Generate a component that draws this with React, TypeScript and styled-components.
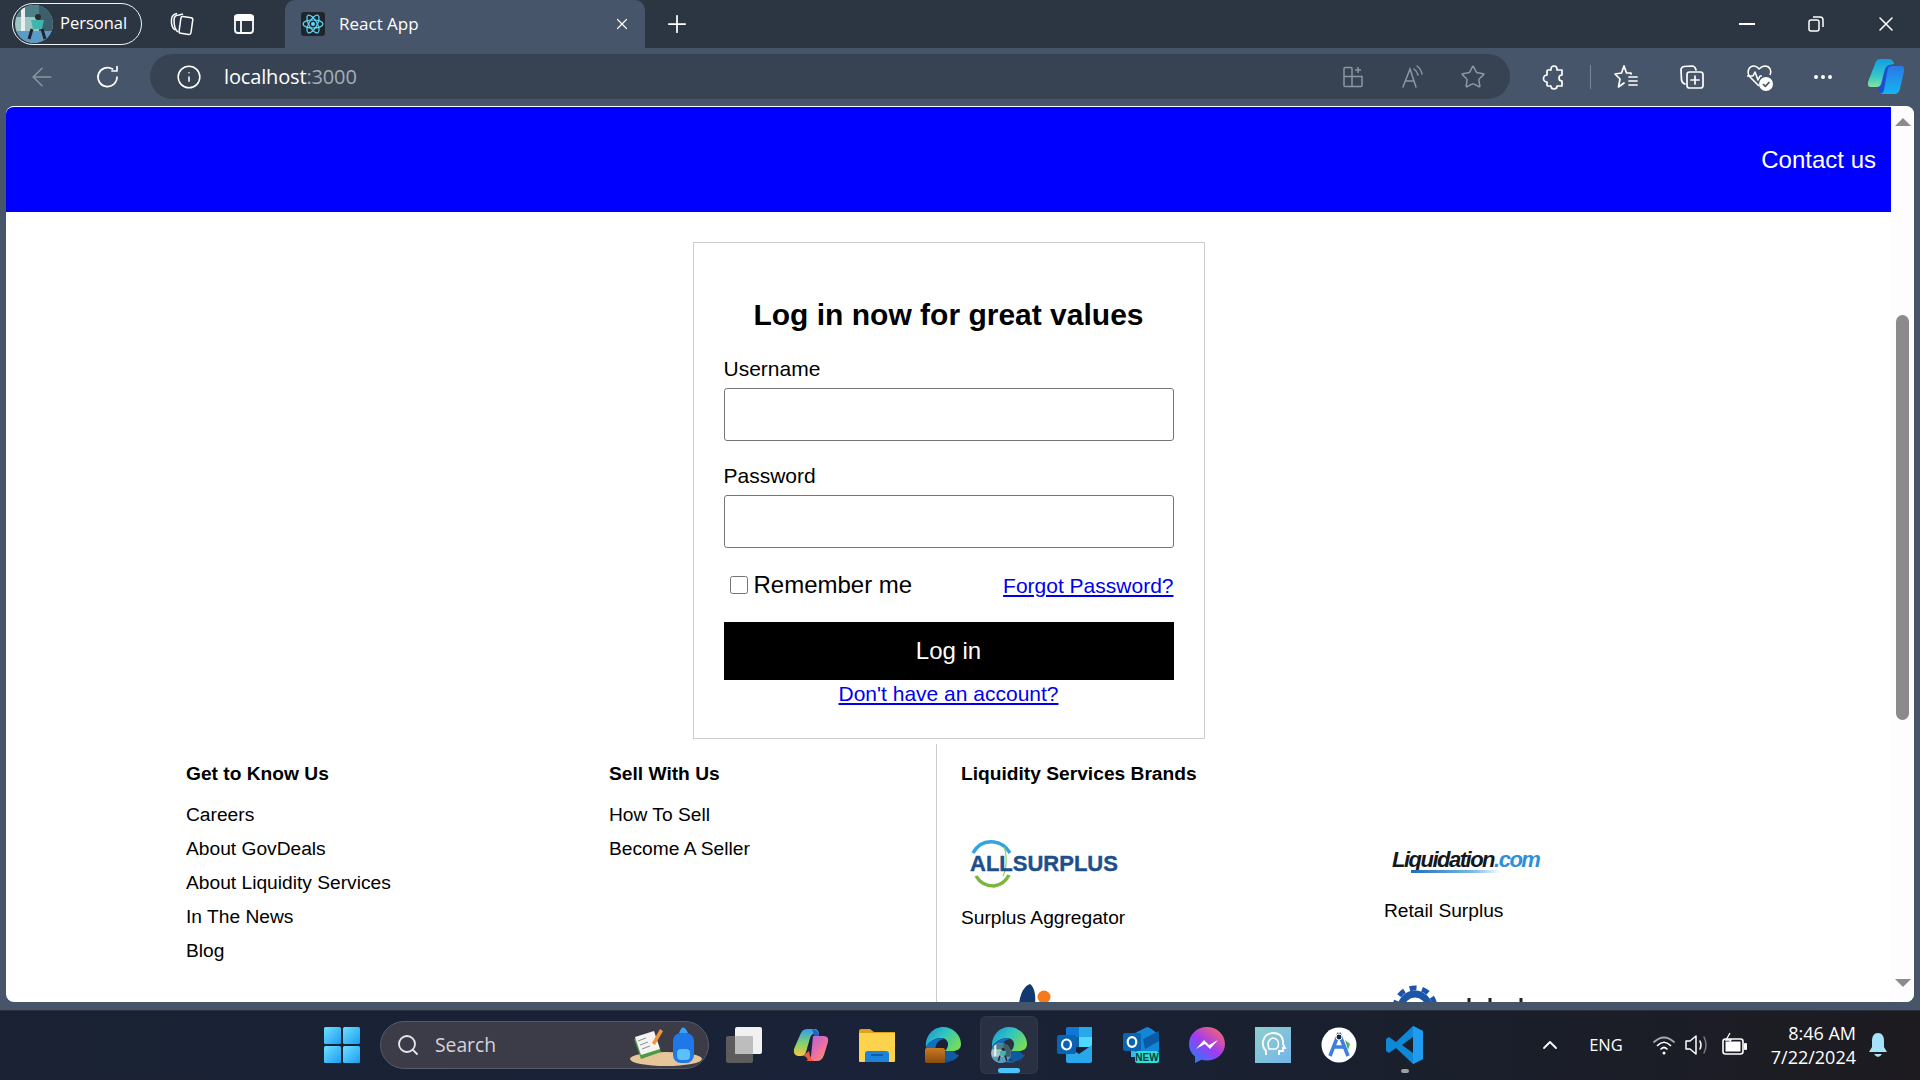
import styled, { createGlobalStyle } from 'styled-components';
import { ArrowLeft, Info, MoreHorizontal, Plus, Search, Star, X, ChevronUp } from 'lucide-react';

const GlobalStyle = createGlobalStyle`
  html, body {
    margin: 0;
    padding: 0;
    overflow: hidden;
    background: #465569;
  }
  * {
    box-sizing: border-box;
  }
`;

const Screen = styled.div`
  display: flex;
  flex-direction: column;
  width: 1920px;
  height: 1080px;
  overflow: hidden;
  background: #465569;
  font-family: 'Open Sans', 'Noto Sans', sans-serif;
`;

/* title bar */
const TitleBar = styled.div`
  display: flex;
  align-items: flex-end;
  flex: none;
  height: 48px;
  padding-left: 12px;
  background: #2c3643;
  color: #fff;
`;

const Profile = styled.div`
  display: flex;
  align-items: center;
  gap: 7px;
  align-self: flex-start;
  width: 130px;
  height: 42px;
  margin-top: 3px;
  padding: 0 0 0 2px;
  border: 1.5px solid #f2f4f6;
  border-radius: 21px;
  font-size: 16.5px;
  line-height: 36px;
`;

const ProfileName = styled.span`
  margin-top: -2px;
`;

const Slot = styled.div<{ $w: number; $ml?: number }>`
  position: relative;
  display: flex;
  align-items: center;
  justify-content: center;
  flex: none;
  width: ${(p) => p.$w}px;
  margin-left: ${(p) => p.$ml ?? 0}px;
`;

const TitleSlot = styled(Slot)`
  align-self: flex-start;
  height: 48px;
`;

const Tab = styled.div`
  display: flex;
  align-items: center;
  width: 360px;
  height: 48px;
  margin-left: 15px;
  padding: 0 14px 0 16px;
  border-radius: 10px 10px 0 0;
  background: #465569;
  font-size: 17px;
`;

const TabTitle = styled.span`
  flex: 1;
  margin: -2px 0 0 14px;
`;

const WindowButtons = styled.div`
  display: flex;
  align-self: flex-start;
  align-items: center;
  height: 48px;
  margin-left: auto;
`;

/* toolbar */
const Toolbar = styled.div`
  display: flex;
  align-items: center;
  flex: none;
  height: 58px;
  padding: 0 0 1px 20px;
  background: #465569;
  color: #fff;
`;

const Omnibox = styled.div`
  display: flex;
  align-items: center;
  width: 1360px;
  height: 45px;
  margin-left: 20px;
  padding: 0 7px 0 26px;
  border-radius: 23px;
  background: #374352;
`;

const Address = styled.span`
  flex: 1;
  margin-left: 22px;
  font-size: 20px;
  letter-spacing: -0.15px;
  color: #fff;
`;

const Port = styled.span`
  color: #a5adb7;
`;

const ToolDivider = styled.div`
  flex: none;
  width: 1px;
  height: 24px;
  margin-left: 14px;
  background: #7b8694;
`;

/* page */
const Viewport = styled.main`
  display: flex;
  flex: none;
  height: 896px;
  margin: 0 6px 8px;
  border-top: 1px solid #fff;
  border-radius: 8px;
  overflow: hidden;
  background: #fff;
  color: #000;
  font-family: 'Liberation Sans', Arial, sans-serif;
`;

const PageContent = styled.div`
  flex: 1;
  min-width: 0;
  overflow: hidden;
`;

const BlueHeader = styled.header`
  display: flex;
  align-items: center;
  justify-content: flex-end;
  height: 105px;
  padding-right: 15px;
  background: #0000ff;
  color: #fff;
  font-size: 24px;
`;

const Card = styled.form`
  display: flex;
  flex-direction: column;
  width: 512px;
  height: 497px;
  margin: 30px auto 0;
  padding: 30px;
  border: 1px solid #ccc;
`;

const CardTitle = styled.h1`
  margin: 25px 0 0;
  font-size: 30px;
  line-height: 34px;
  font-weight: 700;
  text-align: center;
`;

const Label = styled.label<{ $mt: number }>`
  display: block;
  margin-top: ${(p) => p.$mt}px;
  font-size: 21px;
  line-height: 24px;
`;

const TextInput = styled.input`
  display: block;
  width: 100%;
  height: 53px;
  margin-top: 7px;
  padding: 0 8px;
  border: 1px solid #767676;
  border-radius: 3px;
  background: #fff;
`;

const OptionsRow = styled.div`
  display: flex;
  align-items: center;
  justify-content: space-between;
  height: 36px;
  margin-top: 19px;
`;

const Remember = styled.label`
  display: flex;
  align-items: center;
  font-size: 24px;
`;

const Check = styled.input`
  width: 18px;
  height: 18px;
  margin: 0 6px 0 6px;
`;

const BlueLink = styled.a`
  color: #0000ee;
  font-size: 21px;
  line-height: 24px;
  text-decoration: underline;
`;

const ForgotLink = styled(BlueLink)`
  margin-top: 2px;
`;

const SubmitButton = styled.button`
  width: 100%;
  height: 58px;
  flex: none;
  margin-top: 19px;
  border: 0;
  background: #000;
  color: #fff;
  font-family: inherit;
  font-size: 24px;
`;

const SignupRow = styled.div`
  margin-top: 2px;
  text-align: center;
`;

/* footer */
const Footer = styled.footer`
  display: grid;
  grid-template-columns: 423px 328px 1fr;
  margin-top: 5px;
  padding-left: 180px;
`;

const FooterCol = styled.div<{ $divided?: boolean }>`
  padding-top: 18px;
  min-height: 260px;
  border-right: ${(p) => (p.$divided ? '1px solid #ccc' : '0')};
`;

const FooterHead = styled.h3`
  margin: 0 0 17px;
  font-size: 19.2px;
  line-height: 24px;
  font-weight: 700;
`;

const FooterLink = styled.div`
  margin-bottom: 10px;
  font-size: 19.2px;
  line-height: 24px;
`;

const BrandsCol = styled.div`
  padding: 18px 0 0 24px;
`;

const BrandGrid = styled.div`
  display: grid;
  grid-template-columns: 423px 423px;
  grid-auto-rows: 144px;
  margin-top: 54px;
`;

const BrandCell = styled.div`
  display: flex;
  flex-direction: column;
  align-items: flex-start;
`;

const BrandCaption = styled.div`
  font-size: 19.2px;
  line-height: 24px;
`;

const AllSurplusLogo = styled.div`
  position: relative;
  width: 156px;
  height: 48px;
  margin-bottom: 18px;
`;

const AllSurplusWord = styled.span`
  position: absolute;
  left: 9px;
  top: 11px;
  font-size: 22px;
  line-height: 26px;
  font-weight: 700;
  color: #1f4f8a;
  -webkit-text-stroke: 0.4px #1f4f8a;
`;

const LiquidationLogo = styled.div`
  position: relative;
  width: 156px;
  height: 30px;
  margin: 5px 0 24px 8px;
  font-size: 22px;
  line-height: 30px;
  font-weight: 700;
  font-style: italic;
  letter-spacing: -1.5px;
  color: #14181d;
  white-space: nowrap;
`;

const LiquidationCom = styled.span`
  color: #2f8fd8;
`;

const LiquidationSwoosh = styled.div`
  position: absolute;
  left: 19px;
  top: 25px;
  width: 90px;
  height: 3px;
  background: linear-gradient(90deg, #1f6fb5, #7dbbe8 70%, #fff);
`;

/* scrollbar */
const Scrollbar = styled.div`
  display: flex;
  flex-direction: column;
  align-items: center;
  flex: none;
  width: 23px;
  height: 100%;
  padding-top: 11px;
  background: #fdfdfd;
`;

const ScrollUp = styled.div`
  width: 0;
  height: 0;
  border-left: 8px solid transparent;
  border-right: 8px solid transparent;
  border-bottom: 8px solid #8b8b8b;
`;

const ScrollThumb = styled.div`
  width: 13px;
  height: 405px;
  margin-top: 189px;
  border-radius: 7px;
  background: #8b8b8b;
`;

const ScrollDown = styled.div`
  width: 0;
  height: 0;
  margin-top: 259px;
  border-left: 8px solid transparent;
  border-right: 8px solid transparent;
  border-top: 8px solid #8b8b8b;
`;

/* taskbar */
const Taskbar = styled.div`
  display: flex;
  align-items: center;
  flex: 1;
  padding: 0 20px 2px 309px;
  border-top: 1px solid #2a2f3a;
  background: linear-gradient(90deg, #1a2233 0%, #192238 45%, #1a1f2c 75%, #1d1b20 100%);
  color: #fff;
  font-size: 16px;
`;

const TaskSlot = styled(Slot)`
  height: 58px;
`;

const ActiveSlot = styled(TaskSlot)`
  border-radius: 6px;
  background: rgba(255, 255, 255, 0.07);
  box-shadow: inset 0 0 0 1px rgba(255, 255, 255, 0.04);
`;

const RunDot = styled.div<{ $active?: boolean }>`
  position: absolute;
  left: 50%;
  bottom: 1px;
  width: ${(p) => (p.$active ? 22 : 8)}px;
  height: ${(p) => (p.$active ? 5 : 4)}px;
  border-radius: 3px;
  transform: translateX(-50%);
  background: ${(p) => (p.$active ? '#4cc2ff' : '#9b9fa6')};
`;

const SearchBox = styled.div`
  display: flex;
  align-items: center;
  flex: none;
  width: 329px;
  height: 48px;
  margin: 0 3px 0 5px;
  padding: 0 6px 0 15px;
  border: 1px solid #5a5a66;
  border-radius: 24px;
  background: #3c3c48;
`;

const SearchLabel = styled.span`
  flex: 1;
  margin-left: 15px;
  font-size: 19.3px;
  color: #d4d4d8;
`;

const Tray = styled.div`
  display: flex;
  align-items: center;
  height: 100%;
  margin-left: auto;
`;

const TrayText = styled.span`
  width: 68px;
  margin: 0 7px 0 10px;
  text-align: center;
  font-size: 16.5px;
`;

const Clock = styled.div`
  width: 92px;
  margin-left: 7px;
  text-align: right;
  font-size: 18px;
  line-height: 24px;
  white-space: nowrap;
`;

/* icons */
const CollectionsIcon = () => (
  <svg width="26" height="26" viewBox="0 0 26 26" fill="none" stroke="#fff" strokeWidth="1.5">
    <rect x="11" y="6" width="12" height="17" rx="2" transform="rotate(8 17 14)" />
    <path d="M9 21 C6 19 5 16 5 9 C5 6 7 4 10 4 L14 3" />
    <path d="M6 19 C3 17 2 14 2.500 8 C3 5 5 3 8 2.500" />
  </svg>
);

const SidebarIcon = () => (
  <svg width="24" height="24" viewBox="0 0 24 24" fill="none" stroke="#fff" strokeWidth="1.8">
    <rect x="3" y="3" width="18" height="18" rx="3" />
    <path d="M3 4.500 h18 v3.500 H3z M9 8 V21" fill="#fff" />
  </svg>
);

const ReactFavicon = () => (
  <svg width="24" height="24" viewBox="0 0 24 24">
    <rect width="24" height="24" rx="3" fill="#20242b" />
    <g fill="none" stroke="#61dafb" strokeWidth="1.2">
      <ellipse cx="12" cy="12" rx="10" ry="4" />
      <ellipse cx="12" cy="12" rx="10" ry="4" transform="rotate(60 12 12)" />
      <ellipse cx="12" cy="12" rx="10" ry="4" transform="rotate(120 12 12)" />
    </g>
    <circle cx="12" cy="12" r="2" fill="#61dafb" />
  </svg>
);

const Avatar = ({ size = 38 }: { size?: number }) => (
  <svg width={size} height={size} viewBox="0 0 38 38">
    <defs>
      <clipPath id={`av${size}`}>
        <circle cx="19" cy="19" r="19" />
      </clipPath>
    </defs>
    <g clipPath={`url(#av${size})`}>
      <rect width="38" height="38" fill="#9fc4c4" />
      <rect x="0" y="0" width="38" height="12" fill="#4d8088" />
      <rect x="24" y="0" width="14" height="38" fill="#3b5f6c" />
      <rect x="6" y="0" width="4" height="26" fill="#e8efee" />
      <rect x="0" y="26" width="38" height="12" fill="#5c9bc6" />
      <circle cx="23" cy="12" r="3" fill="#2a2a2a" />
      <path d="M16 15 h13 l-2 9 h-9z" fill="#3fb5ad" />
      <path d="M17 24 l-3 10 M27 24 l3 10" stroke="#20262b" strokeWidth="3" />
    </g>
  </svg>
);

const ReloadIcon = () => (
  <svg width="28" height="28" viewBox="0 0 28 28" fill="none" stroke="#fff" strokeWidth="1.7" strokeLinecap="round" strokeLinejoin="round">
    <path d="M23 14 A9.500 9.500 0 1 1 18.500 6" />
    <path d="M23 3.500 V8 H18" />
  </svg>
);

const AppsPlusIcon = () => (
  <svg width="24" height="24" viewBox="0 0 24 24" fill="none" stroke="#8d96a2" strokeWidth="1.5">
    <path d="M3 11.500 V3.500 Q3 2.500 4 2.500 H10 Q11 2.500 11 3.500 V21.500 H4 Q3 21.500 3 20.500 V11.500 H21 V20.500 Q21 21.500 20 21.500 H11" />
    <path d="M17 2 V8 M14 5 H20" />
  </svg>
);

const ReadAloudIcon = () => (
  <svg width="26" height="26" viewBox="0 0 26 26" fill="none" stroke="#8d96a2" strokeWidth="1.5" strokeLinecap="round">
    <path d="M3 23 L10 5 L16 23 M5.500 17 H14" />
    <path d="M14 5 Q17 7 18 11 M17 2 Q21 5 22 10" />
  </svg>
);

const PuzzleIcon = () => (
  <svg width="26" height="26" viewBox="0 0 26 26" fill="none" stroke="#fff" strokeWidth="1.7" strokeLinejoin="round">
    <path d="M10 5 a3 3 0 0 1 6 0 V6 h5 v5 a3 3 0 0 0 0 6 v5 h-5 a3 3 0 0 1 -6 0 H7 a1 1 0 0 1 -1 -1 v-3 a3 3 0 0 1 0 -7 V7 a1 1 0 0 1 1 -1 h3z" />
  </svg>
);

const FavoritesIcon = () => (
  <svg width="28" height="28" viewBox="0 0 28 28" fill="none" stroke="#fff" strokeWidth="1.7" strokeLinejoin="round" strokeLinecap="round">
    <path d="M12 3 L14.500 10 H19 L19 11 M12 3 L9.500 10 L3 11 L8 16 L6.500 24 L12 20" />
    <path d="M17 14 H25 M17 18 H25 M17 22 H25" />
  </svg>
);

const CollectionsPlusIcon = () => (
  <svg width="28" height="28" viewBox="0 0 28 28" fill="none" stroke="#fff" strokeWidth="1.7" strokeLinecap="round">
    <path d="M7 21 Q4 20 3.500 17 L3 7 Q3 4 6 3.500 L14 3 Q17 3 18 7" />
    <rect x="9" y="9" width="16" height="16" rx="2.500" />
    <path d="M17 13 V21 M13 17 H21" />
  </svg>
);

const HealthIcon = () => (
  <svg width="30" height="30" viewBox="0 0 30 30" fill="none" stroke="#fff" strokeWidth="1.6" strokeLinejoin="round">
    <path d="M14 24 L5 15 C1 10 4 4 9 4 C12 4 13 6 14 7 C15 6 17 4 20 4 C25 4 27 9 25 13" />
    <path d="M2 14 H8 L10 10 L13 18 L15 14 H17" />
    <circle cx="21" cy="22" r="7" fill="#fff" stroke="none" />
    <path d="M18 22 L20.300 24.300 L24.500 20" stroke="#465569" strokeWidth="1.7" />
  </svg>
);

const CopilotIcon = () => (
  <svg width="38" height="38" viewBox="0 0 38 38">
    <defs>
      <linearGradient id="cpA" x1="0" y1="0" x2="0" y2="1">
        <stop offset="0" stopColor="#0f9fe6" />
        <stop offset="0.6" stopColor="#35c6c8" />
        <stop offset="1" stopColor="#86e39c" />
      </linearGradient>
      <linearGradient id="cpB" x1="0" y1="0" x2="0" y2="1">
        <stop offset="0" stopColor="#2a78e6" />
        <stop offset="1" stopColor="#14b4f2" />
      </linearGradient>
    </defs>
    <path d="M14 7 L10 27 L13 36 H26 Q30 36 31 31 L36 12 Q37 8 33 8 H26z" fill="#1d4fd0" />
    <path d="M8 6 Q9 1 14 1 H22 Q26 1 27 6 L22 7 Q19 8 18 11 L14 26 Q13 29 10 29 H4 Q0 29 1 24z" fill="url(#cpA)" />
    <path d="M21 10 Q22 8 25 8 H34 Q38 8 37 13 L33 31 Q32 36 27 36 H12 Q16 36 17 32z" fill="url(#cpB)" />
  </svg>
);

const WindowsLogo = () => (
  <svg width="36" height="36" viewBox="0 0 36 36">
    <defs>
      <linearGradient id="winA" x1="0" y1="0" x2="1" y2="1">
        <stop offset="0" stopColor="#6fe0ff" />
        <stop offset="1" stopColor="#1a9cf2" />
      </linearGradient>
    </defs>
    <rect x="0" y="0" width="17" height="17" rx="1.500" fill="url(#winA)" />
    <rect x="19" y="0" width="17" height="17" rx="1.500" fill="url(#winA)" />
    <rect x="0" y="19" width="17" height="17" rx="1.500" fill="url(#winA)" />
    <rect x="19" y="19" width="17" height="17" rx="1.500" fill="url(#winA)" />
  </svg>
);

const SearchArt = () => (
  <svg width="76" height="44" viewBox="0 0 76 44">
    <ellipse cx="40" cy="36" rx="36" ry="7" fill="#e6c598" />
    <path d="M8 16 L28 10 L35 29 L15 36z" fill="#4b9a45" />
    <path d="M9 14 L28 8 L34 26 L15 32z" fill="#f4f4f4" />
    <path d="M12 18 L20 15 M14 22 L22 19 M16 26 L24 23" stroke="#8a8f96" strokeWidth="1" />
    <path d="M26 20 L34 6 L37 8 L29 22z" fill="#f0953a" />
    <rect x="47" y="10" width="21" height="30" rx="8" fill="#1e78e8" />
    <path d="M53 10 Q57 -1 62 10z" fill="#3aa2f4" />
    <rect x="51" y="26" width="13" height="11" rx="4" fill="#5cc0fa" />
  </svg>
);

const TaskViewIcon = () => (
  <svg width="38" height="36" viewBox="0 0 38 36">
    <rect x="0" y="9" width="27" height="27" rx="2" fill="#5c5c5c" />
    <rect x="9" y="0" width="27" height="27" rx="2" fill="#f1f1f1" />
    <rect x="9" y="9" width="18" height="18" rx="1" fill="#bdbdbd" />
  </svg>
);

const CopilotColor = () => (
  <svg width="36" height="36" viewBox="0 0 36 36">
    <defs>
      <linearGradient id="ccA" x1="0" y1="0" x2="0" y2="1">
        <stop offset="0" stopColor="#2f9cf0" />
        <stop offset="0.5" stopColor="#7ed070" />
        <stop offset="1" stopColor="#f5c640" />
      </linearGradient>
      <linearGradient id="ccB" x1="0" y1="0" x2="1" y2="1">
        <stop offset="0" stopColor="#a060e8" />
        <stop offset="0.6" stopColor="#f070a0" />
        <stop offset="1" stopColor="#f8a050" />
      </linearGradient>
    </defs>
    <path d="M7 8 Q9 2 14 2 H22 Q25 2 26 7 L20 7 Q18 8 17 11 L13 25 Q12 29 8 29 H5 Q0 28 1 22z" fill="url(#ccA)" />
    <path d="M19 2 Q24 2 26 8 L27 11 H22z" fill="#2060d0" />
    <path d="M20 9 H31 Q36 9 35 15 L31 28 Q29 34 24 34 H13 Q17 33 18 29z" fill="url(#ccB)" />
    <path d="M10 29 Q14 29 15 34 H21 Q17 32 16 24z" fill="#f05a40" />
  </svg>
);

const FolderIcon = () => (
  <svg width="36" height="34" viewBox="0 0 36 34">
    <path d="M0 3 Q0 1 2 1 H11 L15 4 H36 V12 H0z" fill="#dfa218" />
    <rect x="0" y="5" width="36" height="29" rx="1" fill="#fdd34e" />
    <path d="M6 34 V26 Q6 23 9 23 H27 Q30 23 30 26 V34z" fill="#1b84d8" />
    <rect x="12" y="26" width="12" height="2" fill="#0d5ea8" />
  </svg>
);

const EdgeIcon = ({ id }: { id: string }) => (
  <svg width="36" height="36" viewBox="0 0 36 36">
    <defs>
      <linearGradient id={id} x1="0" y1="0" x2="1" y2="0.600">
        <stop offset="0" stopColor="#1b8fd8" />
        <stop offset="0.5" stopColor="#2fc4c0" />
        <stop offset="1" stopColor="#73dc5c" />
      </linearGradient>
    </defs>
    <path d="M18 0 C28 0 36 8 36 17 C36 22 32 24 28 24 H20 C24 20 24 14 20 12 C14 9 5 13 1 20 C0 9 8 0 18 0z" fill={`url(#${id})`} />
    <path d="M1 20 C5 13 14 9 19 12 C13 13 9 18 11 25 C13 32 20 36 26 34 C22 36 14 37 8 32 C3 29 1 25 1 20z" fill="#0f6fc0" />
    <path d="M28 24 H20 C16 26 16 30 20 33 C25 36 31 33 34 28 C32 28 30 26 28 24z" fill="#0f5aa0" />
  </svg>
);

const BriefcaseBadge = styled.span`
  position: absolute;
  left: 15px;
  bottom: 11px;
  width: 20px;
  height: 15px;
  border-radius: 2px;
  background: linear-gradient(#c97a1e, #8a4c10);
`;

const AvatarBadge = styled.span`
  position: absolute;
  left: 11px;
  bottom: 11px;
  display: flex;
`;

const OutlookIcon = () => (
  <svg width="36" height="36" viewBox="0 0 36 36">
    <rect x="9" y="0" width="26" height="20" rx="2" fill="#0f78d4" />
    <rect x="22" y="0" width="13" height="10" fill="#28a8ea" />
    <rect x="22" y="10" width="13" height="10" fill="#50d9ff" />
    <rect x="9" y="10" width="13" height="10" fill="#0c5fa8" />
    <path d="M9 18 L22 27 L35 18 V34 Q35 36 33 36 H11 Q9 36 9 34z" fill="#2aa6ea" />
    <rect x="0" y="8" width="19" height="19" rx="2" fill="#0a64b4" />
    <ellipse cx="9.500" cy="17.500" rx="4.500" ry="5" fill="none" stroke="#fff" strokeWidth="2.200" />
  </svg>
);

const OutlookNewIcon = () => (
  <svg width="36" height="36" viewBox="0 0 36 36">
    <path d="M8 8 L24 0 Q27 0 36 8 V24 H8z" fill="#1386d8" />
    <path d="M20 12 L36 4 V14 L22 22z" fill="#0b5aa8" />
    <path d="M8 20 L18 30 H8z" fill="#38b8ef" />
    <rect x="0" y="6" width="18" height="18" rx="2" fill="#0a64b4" />
    <ellipse cx="9" cy="15" rx="4.300" ry="4.800" fill="none" stroke="#fff" strokeWidth="2.200" />
    <rect x="12" y="24" width="24" height="12" rx="2.500" fill="#2de0d0" />
    <text x="24" y="34" textAnchor="middle" fontFamily="Liberation Sans, sans-serif" fontWeight="700" fontSize="10" fill="#083a48">NEW</text>
  </svg>
);

const MessengerIcon = () => (
  <svg width="36" height="36" viewBox="0 0 36 36">
    <defs>
      <linearGradient id="msA" x1="0.100" y1="1" x2="0.900" y2="0">
        <stop offset="0" stopColor="#2080ff" />
        <stop offset="0.500" stopColor="#a03cf0" />
        <stop offset="1" stopColor="#ff6868" />
      </linearGradient>
    </defs>
    <path d="M18 0 C8 0 0 7.500 0 17 C0 22 2 26.500 6 29.500 V36 L12.500 32.700 C14.200 33.200 16 33.500 18 33.500 C28 33.500 36 26 36 17 C36 7.500 28 0 18 0z" fill="url(#msA)" />
    <path d="M7 22 L15 13 L20 18 L29 13 L21 22 L16 17z" fill="#fff" />
  </svg>
);

const ProfileAppIcon = () => (
  <svg width="36" height="36" viewBox="0 0 36 36">
    <defs>
      <linearGradient id="paA" x1="0" y1="0" x2="1" y2="1">
        <stop offset="0" stopColor="#8ed0cc" />
        <stop offset="1" stopColor="#74b4ea" />
      </linearGradient>
    </defs>
    <rect width="36" height="36" fill="url(#paA)" />
    <path d="M11 28 V24 Q7 20 8 14 Q10 6 18 6 Q27 6 28 14 V17 L30 21 H28 V24 H24 V28" fill="none" stroke="#fff" strokeWidth="1.800" />
    <path d="M14 22 Q11 13 18 11 Q25 12 23 20 L21 22z" fill="none" stroke="#fff" strokeWidth="1.500" />
  </svg>
);

const AndroidStudioIcon = () => (
  <svg width="36" height="36" viewBox="0 0 36 36">
    <circle cx="18" cy="18" r="17.500" fill="#fff" />
    <path d="M18 6 L9 29 M18 6 L27 29 M11 20 H25" stroke="#3d7fe0" strokeWidth="3.600" fill="none" />
    <circle cx="18" cy="10" r="3" fill="#20262e" stroke="#fff" strokeWidth="1" />
    <path d="M24 13 L29 17 L27 23z" fill="#4caf50" />
  </svg>
);

const VscodeIcon = () => (
  <svg width="38" height="38" viewBox="0 0 38 38">
    <path d="M27 0 L37 5 V33 L27 38 L10 22 L3 27 L0 25 V13 L3 11 L10 16z M27 11 L16 19 L27 27z" fill="#0f88d6" />
    <path d="M27 0 L37 5 V33 L27 38z" fill="#1f9cf0" />
  </svg>
);

const WifiIcon = () => (
  <svg width="24" height="22" viewBox="0 0 24 22" fill="none" stroke="#fff" strokeWidth="1.700" strokeLinecap="round">
    <path d="M2 8 Q12 -1 22 8" stroke="#a5a8ad" />
    <path d="M5.500 11.500 Q12 5 18.500 11.500" />
    <path d="M9 15 Q12 12 15 15" />
    <circle cx="12" cy="19" r="1.500" fill="#fff" stroke="none" />
  </svg>
);

const SpeakerIcon = () => (
  <svg width="26" height="24" viewBox="0 0 26 24" fill="none" stroke="#fff" strokeWidth="1.500" strokeLinejoin="round" strokeLinecap="round">
    <path d="M2 8 H6 L12 3 V21 L6 16 H2z" />
    <path d="M16 8 Q18 12 16 16" />
    <path d="M20 4 Q24 12 20 20" stroke="#7a7d83" />
  </svg>
);

const BatteryIcon = () => (
  <svg width="28" height="26" viewBox="0 0 28 26" fill="none" stroke="#fff" strokeWidth="1.600">
    <rect x="2" y="7" width="20" height="15" rx="2.500" />
    <rect x="4.500" y="9.500" width="15" height="10" fill="#fff" stroke="none" />
    <rect x="23" y="11" width="3" height="7" rx="1" fill="#fff" stroke="none" />
    <path d="M9 1 L5 8 H10 L7 13" strokeWidth="1.300" />
  </svg>
);

const BellIcon = () => (
  <svg width="22" height="26" viewBox="0 0 22 26" fill="#a6e3fb">
    <path d="M11 1 C15 1 17 4 17 9 V15 L20 20 H2 L5 15 V9 C5 4 7 1 11 1z" />
    <path d="M7 22 H15 Q13 25 11 25 Q9 25 7 22z" />
  </svg>
);

const AllSurplusSwoosh = () => (
  <svg width="156" height="48" viewBox="0 0 156 48" fill="none">
    <path d="M12 13 C17 4 25 1 33 2 C41 3 46 8 49 13" stroke="#33a4dc" strokeWidth="3.500" />
    <path d="M15 36 C19 43 26 46 33 46 C40 45 45 41 48 35" stroke="#7cb63c" strokeWidth="3.500" />
    <path d="M43 7 C46 14 46 28 42 36" stroke="#9acb60" strokeWidth="1.200" />
  </svg>
);

const CutOffLogoLeft = () => (
  <svg width="100" height="20" viewBox="0 0 100 20">
    <path d="M58 20 C59 10 63 2 69 0 C73 3 75 10 74 20z" fill="#12386f" />
    <circle cx="83" cy="13" r="6.500" fill="#f47a1c" />
  </svg>
);

const CutOffLogoRight = () => (
  <svg width="160" height="20" viewBox="0 0 160 20">
    <circle cx="31" cy="24" r="20" fill="none" stroke="#1d56a8" strokeWidth="5" strokeDasharray="7 5.600" />
    <circle cx="31" cy="24" r="14" fill="none" stroke="#1d56a8" strokeWidth="7" />
    <path d="M85 14 v6 M106 14 v6 M137 14 v6" stroke="#222" strokeWidth="3" />
  </svg>
);

const CutOffRow = styled.div`
  height: 20px;
`;

const brandLinks = ['Careers', 'About GovDeals', 'About Liquidity Services', 'In The News', 'Blog'];
const sellLinks = ['How To Sell', 'Become A Seller'];

export default function App() {
  return (
    <Screen>
      <GlobalStyle />
      <TitleBar>
        <Profile>
          <Avatar />
          <ProfileName>Personal</ProfileName>
        </Profile>
        <TitleSlot $w={52} $ml={14}>
          <CollectionsIcon />
        </TitleSlot>
        <TitleSlot $w={52} $ml={10}>
          <SidebarIcon />
        </TitleSlot>
        <Tab>
          <ReactFavicon />
          <TabTitle>React App</TabTitle>
          <X size={18} strokeWidth={1.6} />
        </Tab>
        <TitleSlot $w={44} $ml={10}>
          <Plus size={28} strokeWidth={1.5} />
        </TitleSlot>
        <WindowButtons>
          <Slot $w={66}>
            <svg width="16" height="2" viewBox="0 0 16 2">
              <rect width="16" height="2" fill="#fff" />
            </svg>
          </Slot>
          <Slot $w={72}>
            <svg width="16" height="16" viewBox="0 0 16 16" fill="none" stroke="#fff" strokeWidth="1.500">
              <rect x="1" y="4" width="10" height="11" rx="2" />
              <path d="M5 1 H12 Q15 1 15 4 V11" />
            </svg>
          </Slot>
          <Slot $w={68}>
            <X size={24} strokeWidth={1.5} />
          </Slot>
        </WindowButtons>
      </TitleBar>

      <Toolbar>
        <Slot $w={44}>
          <ArrowLeft size={30} strokeWidth={1.2} color="#8d96a2" />
        </Slot>
        <Slot $w={44} $ml={22}>
          <ReloadIcon />
        </Slot>
        <Omnibox>
          <Info size={26} strokeWidth={1.4} />
          <Address>
            localhost<Port>:3000</Port>
          </Address>
          <Slot $w={60}>
            <AppsPlusIcon />
          </Slot>
          <Slot $w={60}>
            <ReadAloudIcon />
          </Slot>
          <Slot $w={60}>
            <Star size={26} strokeWidth={1.4} color="#8d96a2" />
          </Slot>
        </Omnibox>
        <Slot $w={44} $ml={22}>
          <PuzzleIcon />
        </Slot>
        <ToolDivider />
        <Slot $w={66} $ml={2}>
          <FavoritesIcon />
        </Slot>
        <Slot $w={66}>
          <CollectionsPlusIcon />
        </Slot>
        <Slot $w={70}>
          <HealthIcon />
        </Slot>
        <Slot $w={56}>
          <MoreHorizontal size={24} strokeWidth={2} />
        </Slot>
        <Slot $w={69}>
          <CopilotIcon />
        </Slot>
      </Toolbar>

      <Viewport>
        <PageContent>
          <BlueHeader>Contact us</BlueHeader>
          <Card onSubmit={(e) => e.preventDefault()}>
            <CardTitle>Log in now for great values</CardTitle>
            <Label $mt={25}>Username</Label>
            <TextInput type="text" />
            <Label $mt={23}>Password</Label>
            <TextInput type="password" />
            <OptionsRow>
              <Remember>
                <Check type="checkbox" />
                Remember me
              </Remember>
              <ForgotLink href="#">Forgot Password?</ForgotLink>
            </OptionsRow>
            <SubmitButton type="submit">Log in</SubmitButton>
            <SignupRow>
              <BlueLink href="#">Don't have an account?</BlueLink>
            </SignupRow>
          </Card>
          <Footer>
            <FooterCol>
              <FooterHead>Get to Know Us</FooterHead>
              {brandLinks.map((link) => (
                <FooterLink key={link}>{link}</FooterLink>
              ))}
            </FooterCol>
            <FooterCol $divided>
              <FooterHead>Sell With Us</FooterHead>
              {sellLinks.map((link) => (
                <FooterLink key={link}>{link}</FooterLink>
              ))}
            </FooterCol>
            <BrandsCol>
              <FooterHead>Liquidity Services Brands</FooterHead>
              <BrandGrid>
                <BrandCell>
                  <AllSurplusLogo>
                    <AllSurplusSwoosh />
                    <AllSurplusWord>ALLSURPLUS</AllSurplusWord>
                  </AllSurplusLogo>
                  <BrandCaption>Surplus Aggregator</BrandCaption>
                </BrandCell>
                <BrandCell>
                  <LiquidationLogo>
                    Liquidation<LiquidationCom>.com</LiquidationCom>
                    <LiquidationSwoosh />
                  </LiquidationLogo>
                  <BrandCaption>Retail Surplus</BrandCaption>
                </BrandCell>
                <CutOffRow>
                  <CutOffLogoLeft />
                </CutOffRow>
                <CutOffRow>
                  <CutOffLogoRight />
                </CutOffRow>
              </BrandGrid>
            </BrandsCol>
          </Footer>
        </PageContent>
        <Scrollbar>
          <ScrollUp />
          <ScrollThumb />
          <ScrollDown />
        </Scrollbar>
      </Viewport>

      <Taskbar>
        <TaskSlot $w={66}>
          <WindowsLogo />
        </TaskSlot>
        <SearchBox>
          <Search size={24} strokeWidth={1.8} color="#e8e8ea" />
          <SearchLabel>Search</SearchLabel>
          <SearchArt />
        </SearchBox>
        <TaskSlot $w={66}>
          <TaskViewIcon />
        </TaskSlot>
        <TaskSlot $w={66}>
          <CopilotColor />
        </TaskSlot>
        <TaskSlot $w={66}>
          <FolderIcon />
        </TaskSlot>
        <TaskSlot $w={66}>
          <EdgeIcon id="edgeBiz" />
          <BriefcaseBadge />
        </TaskSlot>
        <ActiveSlot $w={58} $ml={4}>
          <EdgeIcon id="edgeMain" />
          <AvatarBadge>
            <Avatar size={20} />
          </AvatarBadge>
          <RunDot $active />
        </ActiveSlot>
        <TaskSlot $w={66} $ml={4}>
          <OutlookIcon />
        </TaskSlot>
        <TaskSlot $w={66}>
          <OutlookNewIcon />
        </TaskSlot>
        <TaskSlot $w={66}>
          <MessengerIcon />
        </TaskSlot>
        <TaskSlot $w={66}>
          <ProfileAppIcon />
        </TaskSlot>
        <TaskSlot $w={66}>
          <AndroidStudioIcon />
        </TaskSlot>
        <TaskSlot $w={66}>
          <VscodeIcon />
          <RunDot />
        </TaskSlot>
        <Tray>
          <ChevronUp size={24} strokeWidth={1.8} />
          <TrayText>ENG</TrayText>
          <Slot $w={34}>
            <WifiIcon />
          </Slot>
          <Slot $w={32}>
            <SpeakerIcon />
          </Slot>
          <Slot $w={44}>
            <BatteryIcon />
          </Slot>
          <Clock>
            8:46 AM
            <br />
            7/22/2024
          </Clock>
          <Slot $w={44}>
            <BellIcon />
          </Slot>
        </Tray>
      </Taskbar>
    </Screen>
  );
}
